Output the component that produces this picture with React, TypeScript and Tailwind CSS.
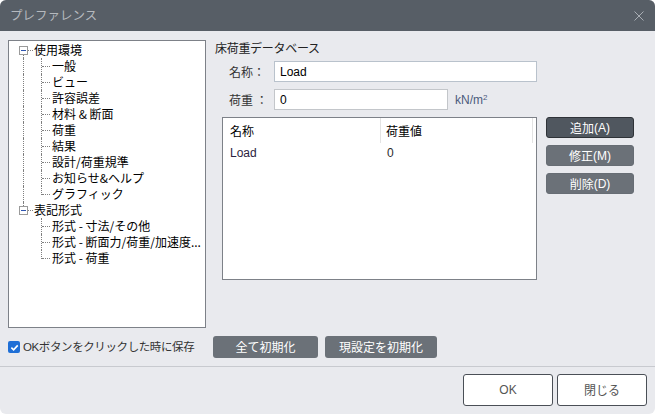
import React from "react";

const jp = { fontFamily: '"Noto Sans CJK JP", "Noto Sans", sans-serif' };
const latin = { fontFamily: '"Liberation Sans", "Noto Sans CJK JP", sans-serif' };

type TreeNode = { label: string; children: string[] };

const tree: TreeNode[] = [
    {
        label: "使用環境",
        children: ["一般", "ビュー", "許容誤差", "材料 & 断面", "荷重", "結果", "設計/荷重規準", "お知らせ&ヘルプ", "グラフィック"],
    },
    {
        label: "表記形式",
        children: ["形式 - 寸法/その他", "形式 - 断面力/荷重/加速度...", "形式 - 荷重"],
    },
];

function RootRow({ label, first, hasNext }: { label: string; first: boolean; hasNext: boolean }) {
    return (
        <div className="relative h-[16px] leading-[16px] text-[12px] text-black">
            {!first && <span className="absolute left-[14px] top-0 h-[4px] border-l border-dotted border-[#808080]" />}
            {hasNext && <span className="absolute left-[14px] top-[13px] bottom-0 border-l border-dotted border-[#808080]" />}
            <span className="absolute left-[10px] top-[4px] flex h-[9px] w-[9px] items-center justify-center border border-[#9a9a9a] bg-white">
                <span className="h-px w-[5px] bg-[#2f55b0]" />
            </span>
            <span className="absolute left-[19px] top-[8px] w-[5px] border-t border-dotted border-[#808080]" />
            <span className="pl-[25px]">{label}</span>
        </div>
    );
}

function ChildRow({ label, last, parentHasNext }: { label: string; last: boolean; parentHasNext: boolean }) {
    return (
        <div className="relative h-[16px] leading-[16px] text-[12px] text-black">
            {parentHasNext && <span className="absolute left-[14px] top-0 bottom-0 border-l border-dotted border-[#808080]" />}
            <span
                className={
                    last
                        ? "absolute left-[32px] top-0 h-[9px] border-l border-dotted border-[#808080]"
                        : "absolute left-[32px] top-0 bottom-0 border-l border-dotted border-[#808080]"
                }
            />
            <span className="absolute left-[33px] top-[8px] w-[8px] border-t border-dotted border-[#808080]" />
            <span className="whitespace-nowrap pl-[43px]">{label}</span>
        </div>
    );
}

function TreePanel() {
    return (
        <div className="h-[288px] w-[198px] shrink-0 overflow-hidden border border-[#7d8188] bg-white pt-[1px]" style={jp}>
            {tree.map((node, i) => {
                const hasNext = i < tree.length - 1;
                return (
                    <div key={node.label}>
                        <RootRow label={node.label} first={i === 0} hasNext={hasNext} />
                        {node.children.map((c, j) => (
                            <ChildRow key={c} label={c} last={j === node.children.length - 1} parentHasNext={hasNext} />
                        ))}
                    </div>
                );
            })}
        </div>
    );
}

function GrayButton({ children, dark }: { children: React.ReactNode; dark?: boolean }) {
    return (
        <button
            className={
                dark
                    ? "flex h-[21px] w-[88px] items-center justify-center rounded-[3px] border border-[#2f3338] bg-[#50575f] text-[12px] text-white"
                    : "flex h-[21px] w-[88px] items-center justify-center rounded-[3px] border border-[#676d74] bg-[#6b7178] text-[12px] text-white"
            }
            style={jp}
        >
            {children}
        </button>
    );
}

function LoadTable() {
    return (
        <div className="h-[163px] w-[315px] border border-[#7d8188] bg-white text-[12px] text-black" style={jp}>
            <div className="flex h-[25px] items-center">
                <div className="flex h-full w-[158px] items-center border-r border-[#e3e3e3] pl-[7px]">名称</div>
                <div className="flex h-full w-[152px] items-center border-r border-[#e3e3e3] pl-[5px]">荷重値</div>
            </div>
            <div className="flex h-[20px] items-center">
                <div className="w-[159px] pl-[7px] text-[#2b2340]" style={latin}>Load</div>
                <div className="pl-[5px] text-[#2b2b2b]" style={latin}>0</div>
            </div>
        </div>
    );
}

function FloorLoadPanel() {
    return (
        <div className="ml-[9px] flex flex-col">
            <div className="h-[16px] text-[12px] leading-[16px] tracking-[-0.3px] text-[#222]" style={jp}>床荷重データベース</div>

            <div className="mt-[5px] flex items-center pl-[14px]">
                <div className="w-[45px] text-[12px] text-[#333]" style={jp}>名称：</div>
                <div className="flex h-[21px] w-[263px] items-center border border-[#b9c2cc] bg-white pl-[5px] text-[12px] text-black" style={latin}>
                    Load
                </div>
            </div>

            <div className="mt-[7px] flex items-center pl-[14px]">
                <div className="w-[45px] text-[12px] text-[#333]" style={jp}>荷重 ：</div>
                <div className="flex h-[21px] w-[174px] items-center border border-[#c3c6ca] bg-white pl-[5px] text-[12px] text-black" style={latin}>
                    0
                </div>
                <div className="ml-[7px] text-[12px] text-[#4b5a7c]" style={latin}>
                    kN/m<sup className="text-[8px]">2</sup>
                </div>
            </div>

            <div className="mt-[7px] flex items-start pl-[7px]">
                <LoadTable />
                <div className="ml-[9px] flex flex-col gap-[7px]">
                    <GrayButton dark>
                        追加<span style={latin}>(A)</span>
                    </GrayButton>
                    <GrayButton>
                        修正<span style={latin}>(M)</span>
                    </GrayButton>
                    <GrayButton>
                        削除<span style={latin}>(D)</span>
                    </GrayButton>
                </div>
            </div>
        </div>
    );
}

export default function App() {
    return (
        <div className="h-[414px] w-[655px] bg-white">
            <div className="flex h-full w-full flex-col overflow-hidden rounded-[6px] bg-[#e9eaee]">
                {/* title bar */}
                <div className="flex h-[31px] shrink-0 items-center justify-between bg-[#575e66] pl-[10px] pr-[11px]">
                    <span className="text-[12.5px] text-[#b5b9be]" style={jp}>プレファレンス</span>
                    <svg width="10" height="10" viewBox="0 0 10 10" fill="none" stroke="#a9aeb4" strokeWidth="1">
                        <path d="M0.5 0.5 L9.5 9.5 M9.5 0.5 L0.5 9.5" />
                    </svg>
                </div>

                <div className="flex pl-[8px] pt-[9px]">
                    <TreePanel />
                    <FloorLoadPanel />
                </div>

                <div className="mt-[8px] flex items-center pl-[8px]">
                    <label className="flex w-[205px] items-center text-[11.5px] text-[#333]" style={jp}>
                        <span className="flex h-[12px] w-[12px] items-center justify-center rounded-[2px] bg-[#1f6fd6]">
                            <svg width="9" height="9" viewBox="0 0 10 10" fill="none" stroke="white" strokeWidth="1.8">
                                <path d="M1.5 5.2 L4 7.6 L8.6 2.6" />
                            </svg>
                        </span>
                        <span className="ml-[3px] whitespace-nowrap tracking-[-0.4px]">
                            <span style={latin}>OK</span>ボタンをクリックした時に保存
                        </span>
                    </label>
                    <button className="flex h-[22px] w-[105px] items-center justify-center rounded-[3px] bg-[#6b7178] text-[12px] text-white" style={jp}>
                        全て初期化
                    </button>
                    <button className="ml-[7px] flex h-[22px] w-[112px] items-center justify-center rounded-[3px] bg-[#6b7178] text-[12px] text-white" style={jp}>
                        現設定を初期化
                    </button>
                </div>

                <div className="mt-[8px] h-px w-full bg-[#c8cacf]" />

                <div className="mt-[7px] flex justify-end gap-[4px] pr-[8px]">
                    <button className="h-[32px] w-[90px] rounded-[3px] border border-[#4a4f56] bg-white text-[12px] text-[#555]" style={latin}>
                        OK
                    </button>
                    <button className="h-[32px] w-[90px] rounded-[3px] border border-[#4a4f56] bg-white text-[12px] text-[#555]" style={jp}>
                        閉じる
                    </button>
                </div>
            </div>
        </div>
    );
}
